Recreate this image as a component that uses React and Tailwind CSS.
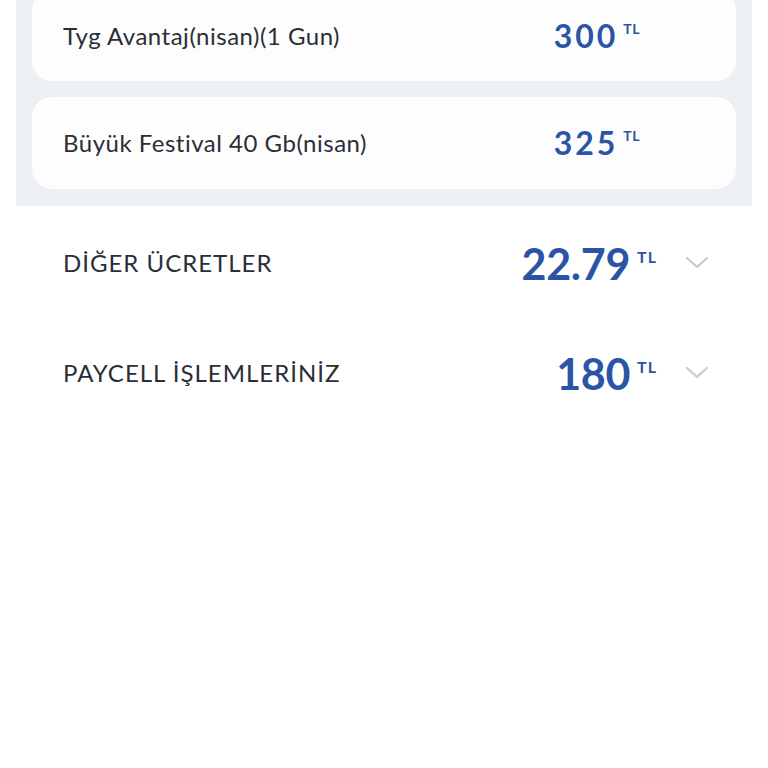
import React from "react";

const font = { fontFamily: '"Lato", "Noto Sans", sans-serif' };

function Chevron() {
  return (
    <svg width="24" height="14" viewBox="0 0 24 14" fill="none">
      <polyline points="2,2 12,11 22,2" stroke="#c9cacc" strokeWidth="2.2" strokeLinecap="round" strokeLinejoin="round" />
    </svg>
  );
}

function CardPrice({ value }) {
  return (
    <div className="flex items-start">
      <span className="text-[32px] leading-none font-bold text-[#2c54a6] tracking-[3px]">{value}</span>
      <span className="ml-[5px] mt-[2px] text-[14px] leading-none font-bold text-[#2c54a6] tracking-[0.5px]">TL</span>
    </div>
  );
}

function Card({ label, value, className = "" }) {
  return (
    <div className={"flex items-center justify-between bg-[#fdfdfe] rounded-[20px] pl-[31px] pr-[96px] " + className}>
      <span className="text-[24px] text-[#2a2e37] tracking-[0.5px]">{label}</span>
      <CardPrice value={value} />
    </div>
  );
}

function Row({ label, value }) {
  return (
    <div className="h-[110px] flex items-center pl-[63px] pr-[59px]">
      <span className="flex-1 text-[24px] text-[#2a2e37] tracking-[1px]">{label}</span>
      <div className="flex items-start">
        <span className="text-[43px] leading-none font-bold text-[#2c54a6] tracking-[-0.3px]">{value}</span>
        <span className="ml-[7px] mt-[7px] text-[16px] leading-none font-bold text-[#2c54a6] tracking-[1px]">TL</span>
      </div>
      <div className="ml-[28px] flex items-center">
        <Chevron />
      </div>
    </div>
  );
}

export default function App() {
  return (
    <div className="w-full min-h-screen bg-white overflow-hidden" style={font}>
      <div className="mx-4 bg-[#eceff3] px-4 pb-[17px] flex flex-col gap-4">
        <Card label="Tyg Avantaj(nisan)(1 Gun)" value="300" className="h-[91px] -mt-[10px]" />
        <Card label="Büyük Festival 40 Gb(nisan)" value="325" className="h-[92px]" />
      </div>
      <div className="pt-[2px]">
        <Row label="DİĞER ÜCRETLER" value="22.79" />
        <Row label="PAYCELL İŞLEMLERİNİZ" value="180" />
      </div>
    </div>
  );
}
